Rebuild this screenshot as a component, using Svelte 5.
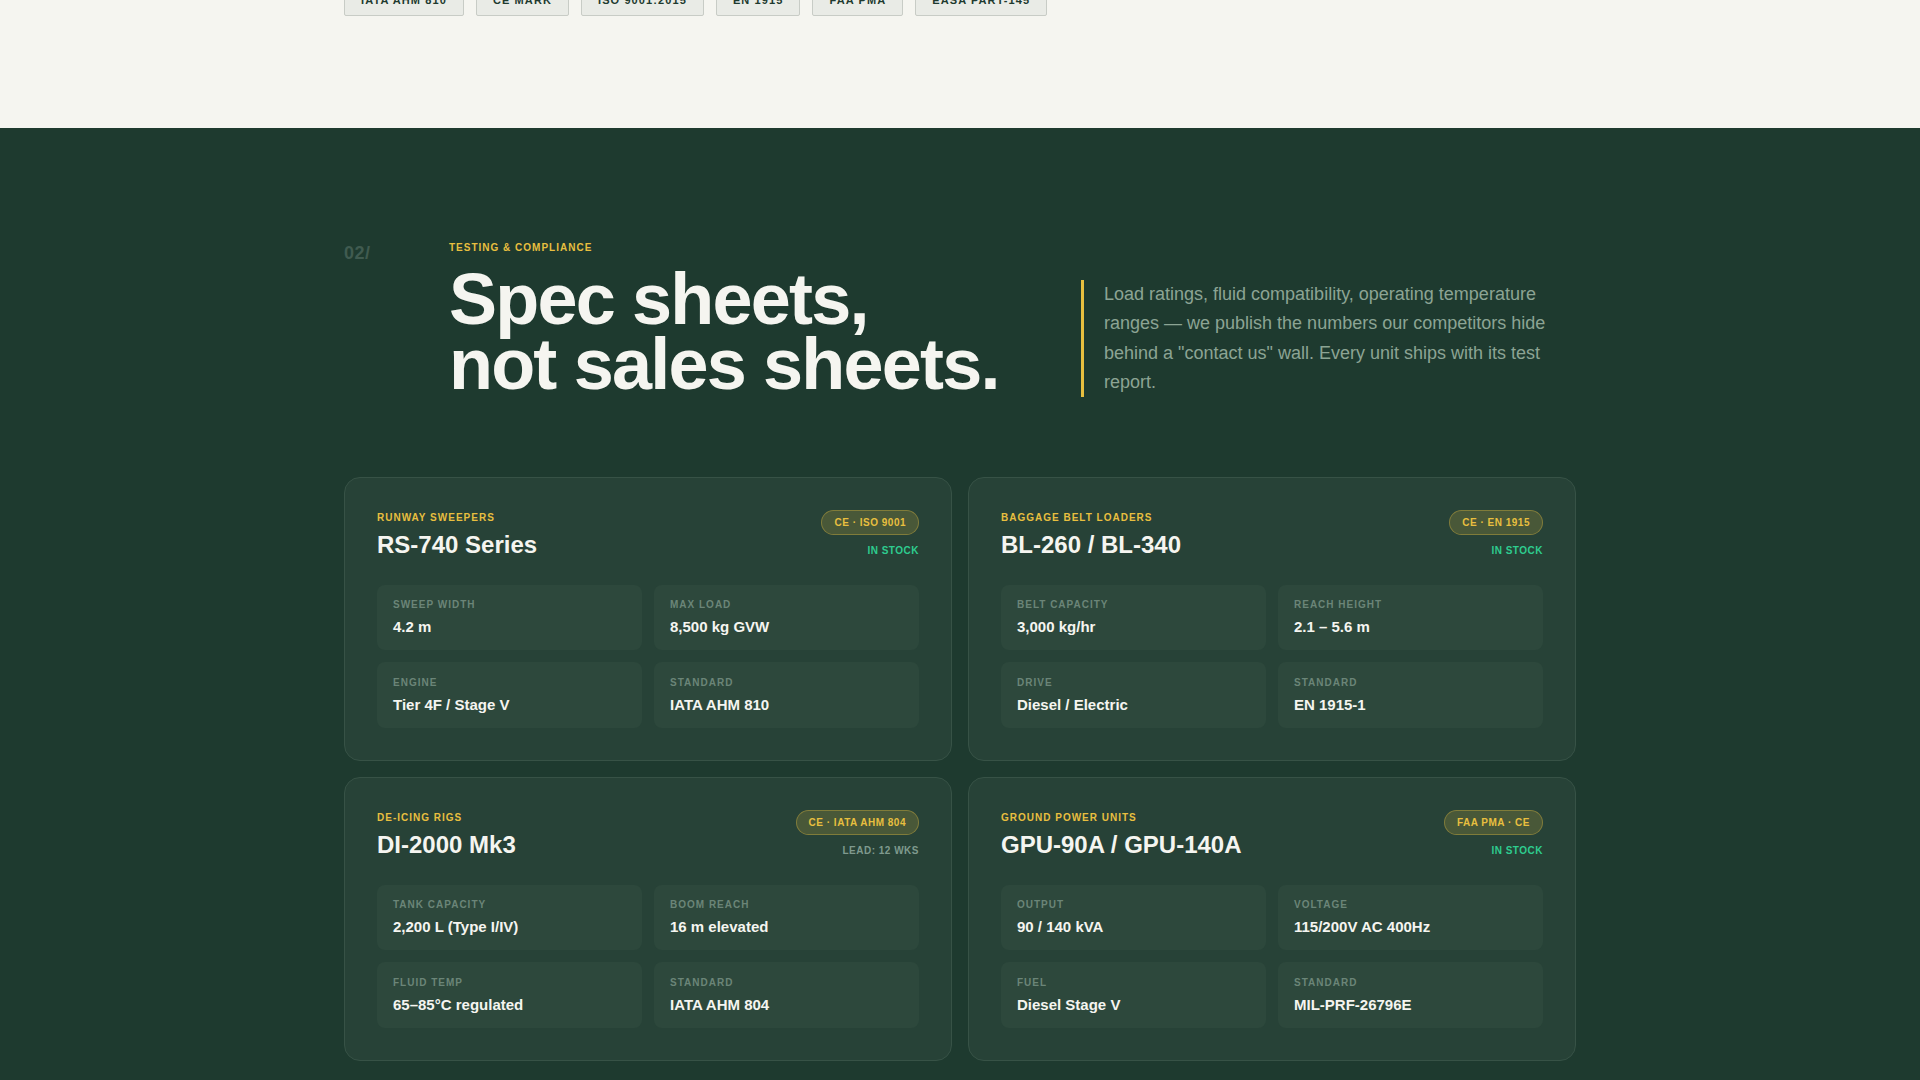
<script lang="ts">
	const chips = ['IATA AHM 810', 'CE MARK', 'ISO 9001:2015', 'EN 1915', 'FAA PMA', 'EASA PART-145'];

	type Spec = { label: string; value: string };
	type Product = {
		category: string;
		name: string;
		badge: string;
		status: string;
		inStock: boolean;
		specs: Spec[];
	};

	const products: Product[] = [
		{
			category: 'Runway Sweepers',
			name: 'RS-740 Series',
			badge: 'CE · ISO 9001',
			status: 'In Stock',
			inStock: true,
			specs: [
				{ label: 'Sweep Width', value: '4.2 m' },
				{ label: 'Max Load', value: '8,500 kg GVW' },
				{ label: 'Engine', value: 'Tier 4F / Stage V' },
				{ label: 'Standard', value: 'IATA AHM 810' }
			]
		},
		{
			category: 'Baggage Belt Loaders',
			name: 'BL-260 / BL-340',
			badge: 'CE · EN 1915',
			status: 'In Stock',
			inStock: true,
			specs: [
				{ label: 'Belt Capacity', value: '3,000 kg/hr' },
				{ label: 'Reach Height', value: '2.1 – 5.6 m' },
				{ label: 'Drive', value: 'Diesel / Electric' },
				{ label: 'Standard', value: 'EN 1915-1' }
			]
		},
		{
			category: 'De-Icing Rigs',
			name: 'DI-2000 Mk3',
			badge: 'CE · IATA AHM 804',
			status: 'Lead: 12 wks',
			inStock: false,
			specs: [
				{ label: 'Tank Capacity', value: '2,200 L (Type I/IV)' },
				{ label: 'Boom Reach', value: '16 m elevated' },
				{ label: 'Fluid Temp', value: '65–85°C regulated' },
				{ label: 'Standard', value: 'IATA AHM 804' }
			]
		},
		{
			category: 'Ground Power Units',
			name: 'GPU-90A / GPU-140A',
			badge: 'FAA PMA · CE',
			status: 'In Stock',
			inStock: true,
			specs: [
				{ label: 'Output', value: '90 / 140 kVA' },
				{ label: 'Voltage', value: '115/200V AC 400Hz' },
				{ label: 'Fuel', value: 'Diesel Stage V' },
				{ label: 'Standard', value: 'MIL-PRF-26796E' }
			]
		}
	];
</script>

<section class="certs">
	<div class="wrap chips">
		{#each chips as chip}
			<span class="chip">{chip}</span>
		{/each}
	</div>
</section>

<section class="specs">
	<div class="wrap">
		<header class="head">
			<span class="num">02/</span>
			<div>
				<p class="eyebrow">Testing &amp; Compliance</p>
				<h2>Spec sheets,<br />not sales sheets.</h2>
			</div>
			<p class="lede">
				Load ratings, fluid compatibility, operating temperature ranges — we publish the numbers our
				competitors hide behind a "contact us" wall. Every unit ships with its test report.
			</p>
		</header>

		<div class="cards">
			{#each products as product}
				<article class="card">
					<div class="card-top">
						<div>
							<p class="category">{product.category}</p>
							<h3>{product.name}</h3>
						</div>
						<div class="meta">
							<span class="badge">{product.badge}</span>
							<span class="status" class:stock={product.inStock}>{product.status}</span>
						</div>
					</div>
					<div class="grid">
						{#each product.specs as spec}
							<div class="cell">
								<span class="label">{spec.label}</span>
								<span class="value">{spec.value}</span>
							</div>
						{/each}
					</div>
				</article>
			{/each}
		</div>
	</div>
</section>

<style>
	:global(body) {
		background: #f5f5f0;
		overflow: hidden;
		font-family: 'Liberation Sans', Arial, sans-serif;
	}

	.wrap {
		width: 1232px;
		margin: 0 auto;
	}

	.certs {
		padding-bottom: 112px;
	}

	.chips {
		display: flex;
		gap: 12px;
		margin-top: -16px;
	}

	.chip {
		box-sizing: border-box;
		height: 32px;
		padding: 0 16px 1px;
		display: flex;
		align-items: center;
		font-size: 11px;
		font-weight: 700;
		letter-spacing: 0.1em;
		color: #1e3a2f;
		background: #e9ebe6;
		border: 1px solid #c8ccc6;
		border-radius: 2px;
	}

	.specs {
		background: #1e3a2f;
		padding: 112px 0;
	}

	.head {
		display: grid;
		grid-template-columns: 80px 1fr 495px;
		column-gap: 25px;
		align-items: start;
		margin-bottom: 80px;
	}

	.num {
		font-size: 18px;
		font-weight: 700;
		line-height: 21px;
		padding-top: 3px;
		letter-spacing: 0.03em;
		color: #405b50;
	}

	.eyebrow {
		margin: 1px 0 13px;
		font-size: 10px;
		line-height: 13px;
		font-weight: 700;
		letter-spacing: 0.1em;
		text-transform: uppercase;
		color: #e8bf3f;
	}

	h2 {
		margin: 0;
		font-size: 72px;
		line-height: 0.9;
		font-weight: 700;
		letter-spacing: -0.025em;
		color: #f5f5f0;
	}

	.lede {
		box-sizing: border-box;
		align-self: end;
		height: 117px;
		margin: 0;
		padding: 0.4px 0 0 20px;
		border-left: 3px solid #e8bf3f;
		font-size: 18px;
		line-height: 29.3px;
		color: #8ca494;
	}

	.cards {
		display: grid;
		grid-template-columns: 1fr 1fr;
		gap: 16px;
	}

	.card {
		padding: 32px;
		background: #274237;
		border: 1px solid #375246;
		border-radius: 16px;
	}

	.card-top {
		display: flex;
		justify-content: space-between;
		align-items: flex-start;
		height: 47px;
		margin-bottom: 28.3px;
	}

	.category {
		margin: 2px 0 6px;
		font-size: 10px;
		line-height: 12px;
		font-weight: 700;
		letter-spacing: 0.1em;
		text-transform: uppercase;
		color: #e8bf3f;
	}

	h3 {
		margin: 0;
		font-size: 24px;
		line-height: 30px;
		font-weight: 700;
		color: #f5f5f0;
	}

	.meta {
		display: flex;
		flex-direction: column;
		align-items: flex-end;
		gap: 10px;
	}

	.badge {
		box-sizing: border-box;
		height: 25px;
		padding: 0 12px;
		display: flex;
		align-items: center;
		font-size: 10px;
		font-weight: 700;
		letter-spacing: 0.05em;
		color: #e8bf3f;
		background: rgba(232, 191, 63, 0.18);
		border: 1px solid rgba(232, 191, 63, 0.35);
		border-radius: 999px;
	}

	.status {
		font-size: 10px;
		line-height: 12px;
		font-weight: 700;
		letter-spacing: 0.05em;
		text-transform: uppercase;
		color: #7f9a8e;
	}

	.status.stock {
		color: #2ecc8f;
	}

	.grid {
		display: grid;
		grid-template-columns: 1fr 1fr;
		gap: 12px;
	}

	.cell {
		display: flex;
		flex-direction: column;
		gap: 5px;
		padding: 13.4px 16px 12.95px;
		background: #2d483c;
		border-radius: 8px;
	}

	.label {
		font-size: 10px;
		line-height: 14px;
		font-weight: 700;
		letter-spacing: 0.1em;
		text-transform: uppercase;
		color: #6b8578;
	}

	.value {
		font-size: 15px;
		line-height: 20px;
		font-weight: 700;
		color: #f5f5f0;
	}
</style>
